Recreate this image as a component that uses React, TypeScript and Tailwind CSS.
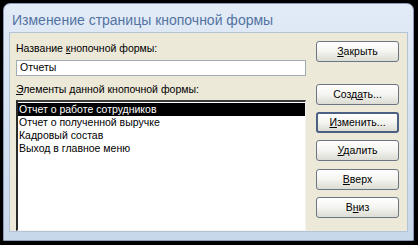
import React from 'react'

const font = { fontFamily: '"Liberation Sans", Arial, sans-serif' }

function Btn({ pre, u, post, focused }: { pre?: string; u: string; post?: string; focused?: boolean }) {
  return (
    <div
      className={
        'flex h-[21px] w-[83px] items-center justify-center rounded-[3px] bg-gradient-to-b from-[#ffffff] via-[#f4f4f0] to-[#dcdcd4] text-[10.5px] text-black ' +
        (focused ? 'border-2 border-[#4b6082]' : 'border border-[#6a7686]')
      }
    >
      <span>
        {pre}
        <span className="underline underline-offset-[1px]">{u}</span>
        {post}
      </span>
    </div>
  )
}

export default function App() {
  const items = [
    'Отчет о полученной выручке',
    'Кадровый состав',
    'Выход в главное меню',
  ]

  return (
    <div className="h-[245px] w-[418px] bg-black p-[3px] pr-[4px] pb-[4px]" style={font}>
      <div className="flex h-full flex-col rounded-t-[7px] border border-[#8a9bb3] bg-gradient-to-b from-[#e2ebf6] to-[#c8d8eb]">
        {/* title bar */}
        <div className="flex h-[28px] shrink-0 items-center pl-[8px] pt-[5px] text-[14px] text-[#5273a3]">
          Изменение страницы кнопочной формы
        </div>

        {/* client area */}
        <div className="mx-[5px] mb-[8px] flex flex-1 border border-[#b3c3d8] bg-[#ece9d8] pl-[6px] pr-[8px]">
          {/* left column */}
          <div className="flex w-[290px] flex-col pt-[8px]">
            <div className="h-[14px] text-[10.5px] leading-[14px] text-black">
              Название <span className="underline underline-offset-[1px]">к</span>нопочной формы:
            </div>
            <div className="mt-[5px] flex h-[16px] items-center border border-[#a3abb6] bg-white pl-[3px] text-[10.5px] text-black">
              Отчеты
            </div>
            <div className="mt-[6px] h-[14px] text-[10.5px] leading-[14px] text-black">
              <span className="underline underline-offset-[1px]">Э</span>лементы данной кнопочной формы:
            </div>
            <div className="mt-[4px] flex h-[131px] flex-col border-l-2 border-t-2 border-r border-b border-l-[#2a2a2a] border-t-[#3a3a3a] border-r-[#f4f3ec] border-b-[#f4f3ec] bg-white pt-[1px] text-[10.5px]">
              <div className="h-[13px] bg-black pl-[1px] leading-[13px] text-white">Отчет о работе сотрудников</div>
              {items.map((t) => (
                <div key={t} className="h-[13px] pl-[1px] leading-[13px] text-black">
                  {t}
                </div>
              ))}
            </div>
          </div>

          {/* right column */}
          <div className="ml-auto flex flex-col pt-[8px]">
            <Btn u="З" post="акрыть" />
            <div className="mt-[22px] flex flex-col gap-[7px]">
              <Btn pre="Созд" u="а" post="ть..." />
              <Btn u="И" post="зменить..." focused />
              <Btn u="У" post="далить" />
            </div>
            <div className="mt-[8px] flex flex-col gap-[7px]">
              <Btn u="В" post="верх" />
              <Btn pre="В" u="н" post="из" />
            </div>
          </div>
        </div>
      </div>
    </div>
  )
}
